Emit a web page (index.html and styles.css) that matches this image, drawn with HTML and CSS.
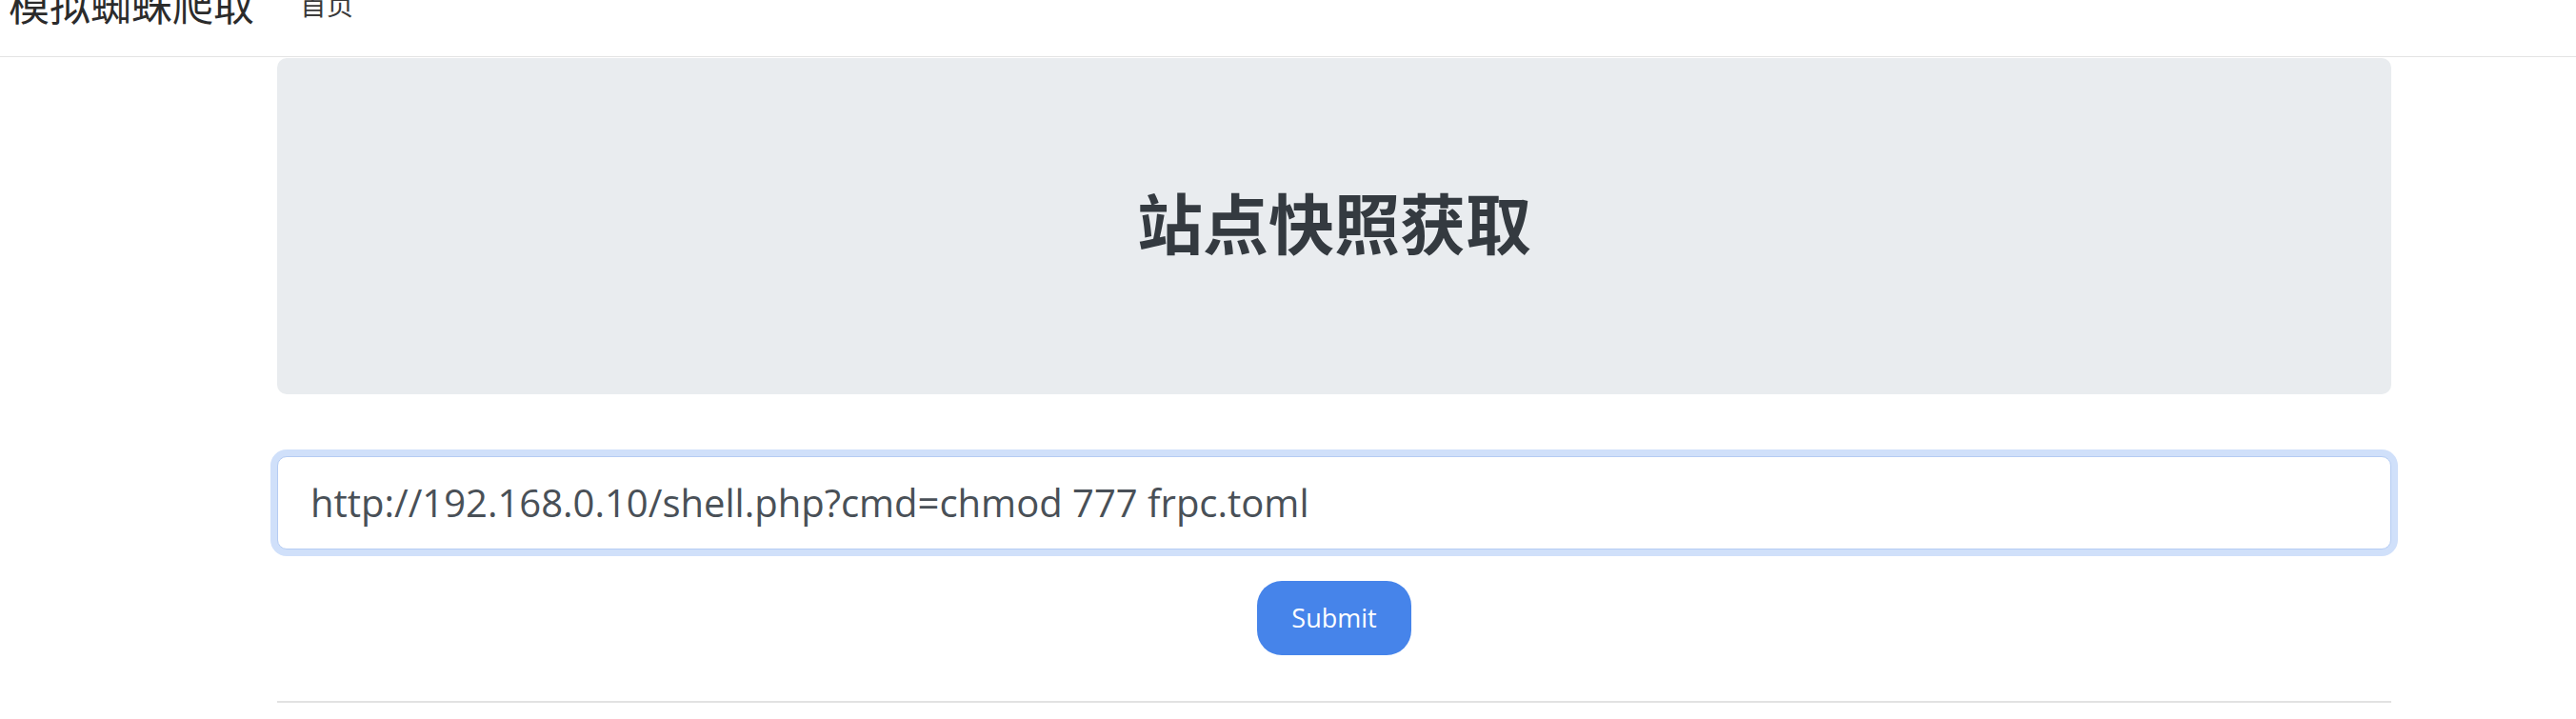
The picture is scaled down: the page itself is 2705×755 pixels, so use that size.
FILE: index.html
```html
<!DOCTYPE html>
<html lang="zh-CN">
<head>
<meta charset="utf-8">
<title>站点快照获取</title>
<link rel="stylesheet" href="styles.css">
</head>
<body>
<nav class="navbar">
  <a class="brand" href="#">模拟蜘蛛爬取</a>
  <a class="nav-link" href="#">首页</a>
</nav>
<main class="container">
  <section class="jumbotron">
    <h1 class="title">站点快照获取</h1>
  </section>
  <form class="snap-form">
    <input class="url-input" type="text" value="http://192.168.0.10/shell.php?cmd=chmod 777 frpc.toml">
    <button class="submit-btn" type="button">Submit</button>
  </form>
  <hr class="divider">
</main>
</body>
</html>
```

FILE: styles.css
```css
html, body {
  margin: 0;
  padding: 0;
  background: #ffffff;
}

body {
  font-family: "Open Sans", "Noto Sans", "Noto Sans CJK SC", sans-serif;
  color: #212529;
  overflow: hidden;
}

.navbar {
  display: flex;
  align-items: center;
  box-sizing: border-box;
  height: 112px;
  margin-top: -52px;
  padding: 0 0 0 9px;
  border-bottom: 1px solid #e3e3e3;
  gap: 48px;
}

.brand {
  font-family: "Noto Sans CJK SC", sans-serif;
  font-size: 43px;
  line-height: 1.5;
  color: #2b2b2b;
  text-decoration: none;
}

.nav-link {
  font-family: "Noto Sans CJK SC", sans-serif;
  font-size: 28px;
  line-height: 1.5;
  color: #3a3a3a;
  text-decoration: none;
}

.container {
  width: 2220px;
  margin-left: 291px;
}

.jumbotron {
  margin-top: 1px;
  background: #e9ecef;
  border-radius: 10px;
  padding: 130px 0 140px;
}

.title {
  margin: 0;
  text-align: center;
  font-family: "Noto Sans CJK SC", sans-serif;
  font-size: 69px;
  line-height: 1.2;
  font-weight: 700;
  color: #343a40;
}

.snap-form {
  display: flex;
  flex-direction: column;
  align-items: center;
  margin-top: 65px;
}

.url-input {
  box-sizing: border-box;
  width: 100%;
  height: 98px;
  padding: 0 34px;
  border: 1px solid #b5ccf3;
  border-radius: 10px;
  box-shadow: 0 0 0 7px #d0e0fa;
  outline: none;
  background: #ffffff;
  font-family: "Open Sans", "Noto Sans", sans-serif;
  font-size: 40px;
  color: #495057;
}

.submit-btn {
  margin-top: 33px;
  box-sizing: border-box;
  width: 162px;
  height: 78px;
  border: none;
  border-radius: 26px;
  background: #4684ea;
  color: #ffffff;
  font-family: "Open Sans", "Noto Sans", sans-serif;
  font-size: 27px;
  padding: 0;
}

.divider {
  margin: 48px 0 0;
  border: 0;
  border-top: 2px solid #e2e2e2;
}
```
